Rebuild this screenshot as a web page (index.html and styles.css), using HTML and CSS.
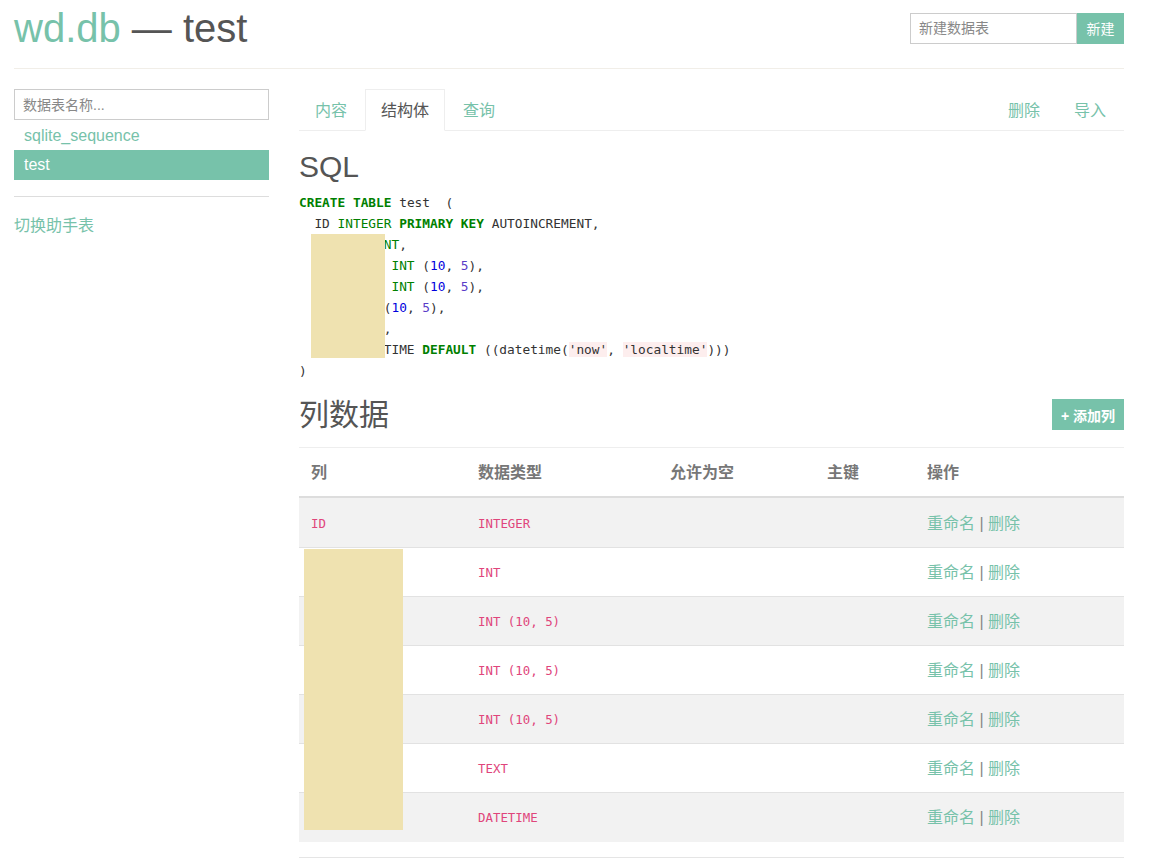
FILE: index.html
```html
<!DOCTYPE html>
<html lang="zh">
<head>
<meta charset="utf-8">
<title>wd.db — test</title>
<link rel="stylesheet" href="styles.css">
</head>
<body>
<div class="page">
  <header class="top">
    <h1 class="title"><span class="brand">wd.db</span> — test</h1>
    <form class="create">
      <input class="create-input" type="text" placeholder="新建数据表">
      <button class="btn create-btn" type="button">新建</button>
    </form>
  </header>
  <div class="divider"></div>
  <div class="main">
    <aside class="side">
      <input class="side-search" type="text" placeholder="数据表名称...">
      <ul class="tables">
        <li class="table-item">sqlite_sequence</li>
        <li class="table-item active">test</li>
      </ul>
      <div class="side-rule"></div>
      <a class="side-link">切换助手表</a>
    </aside>
    <section class="content">
      <nav class="tabs">
        <a class="tab">内容</a>
        <a class="tab active">结构体</a>
        <a class="tab">查询</a>
        <span class="tab-spacer"></span>
        <a class="tab">删除</a>
        <a class="tab">导入</a>
      </nav>
      <h2 class="heading sql-heading">SQL</h2>
      <div class="code-wrap">
        <div class="code">
          <div class="ln"><span class="kw">CREATE</span> <span class="kw">TABLE</span> test  (</div>
          <div class="ln">  ID <span class="ty">INTEGER</span> <span class="kw">PRIMARY</span> <span class="kw">KEY</span> AUTOINCREMENT,</div>
          <div class="ln">          <span class="ty">INT</span>,</div>
          <div class="ln">            <span class="ty">INT</span> (<span class="num">10</span>, <span class="num2">5</span>),</div>
          <div class="ln">            <span class="ty">INT</span> (<span class="num">10</span>, <span class="num2">5</span>),</div>
          <div class="ln">           (<span class="num">10</span>, <span class="num2">5</span>),</div>
          <div class="ln">           ,</div>
          <div class="ln">           TIME <span class="kw">DEFAULT</span> ((datetime(<span class="str">'now'</span>, <span class="str">'localtime'</span>)))</div>
          <div class="ln">)</div>
        </div>
        <div class="redact code-redact"></div>
      </div>
      <div class="cols-head">
        <h2 class="heading">列数据</h2>
        <button class="btn add-btn" type="button">+ 添加列</button>
      </div>
      <div class="table-wrap">
        <table class="cols">
          <colgroup>
            <col class="c1"><col class="c2"><col class="c3"><col class="c4"><col class="c5">
          </colgroup>
          <thead>
            <tr><th>列</th><th>数据类型</th><th>允许为空</th><th>主键</th><th>操作</th></tr>
          </thead>
          <tbody>
            <tr><td><code>ID</code></td><td><code>INTEGER</code></td><td></td><td></td><td><a class="act">重命名</a> <span class="sep">|</span> <a class="act">删除</a></td></tr>
            <tr><td></td><td><code>INT</code></td><td></td><td></td><td><a class="act">重命名</a> <span class="sep">|</span> <a class="act">删除</a></td></tr>
            <tr><td></td><td><code>INT (10, 5)</code></td><td></td><td></td><td><a class="act">重命名</a> <span class="sep">|</span> <a class="act">删除</a></td></tr>
            <tr><td></td><td><code>INT (10, 5)</code></td><td></td><td></td><td><a class="act">重命名</a> <span class="sep">|</span> <a class="act">删除</a></td></tr>
            <tr><td></td><td><code>INT (10, 5)</code></td><td></td><td></td><td><a class="act">重命名</a> <span class="sep">|</span> <a class="act">删除</a></td></tr>
            <tr><td></td><td><code>TEXT</code></td><td></td><td></td><td><a class="act">重命名</a> <span class="sep">|</span> <a class="act">删除</a></td></tr>
            <tr><td></td><td><code>DATETIME</code></td><td></td><td></td><td><a class="act">重命名</a> <span class="sep">|</span> <a class="act">删除</a></td></tr>
          </tbody>
        </table>
        <div class="redact table-redact"></div>
      </div>
      <div class="bottom-rule"></div>
    </section>
  </div>
</div>
</body>
</html>
```
FILE: styles.css
```css
* { box-sizing: border-box; }
html, body { margin: 0; padding: 0; background: #fff; }
body {
  font-family: "Liberation Sans", "Noto Sans CJK SC", Arial, sans-serif;
  color: #555;
  font-size: 14px;
  overflow: hidden;
}
.page { width: 1110px; margin-left: 14px; }

.top {
  display: flex;
  align-items: center;
  justify-content: space-between;
  padding-top: 6px;
}
.title {
  margin: 0;
  font-size: 40px;
  line-height: 44px;
  font-weight: normal;
  color: #555;
}
.brand { color: #77c2aa; }
.create { display: flex; margin: 0; }
.create-input {
  width: 167px;
  height: 31px;
  border: 1px solid #ccc;
  padding: 0 8px;
  font-family: inherit;
  font-size: 14px;
  color: #555;
  outline: none;
}
.create-input::placeholder, .side-search::placeholder { color: #888; }
.btn {
  border: 0;
  background: #77c2aa;
  color: #fff;
  font-family: inherit;
  font-size: 14px;
  cursor: pointer;
}
.create-btn { width: 47px; height: 31px; padding: 0; }

.divider { height: 1px; background: #f1eee8; margin-top: 18px; }

.main { display: flex; gap: 30px; margin-top: 20px; }
.side { width: 255px; flex: none; }
.side-search {
  display: block;
  width: 255px;
  height: 31px;
  border: 1px solid #ccc;
  padding: 0 8px;
  font-family: inherit;
  font-size: 14px;
  outline: none;
}
.tables { list-style: none; margin: 0; padding: 0; }
.table-item {
  height: 30px;
  line-height: 30px;
  padding-left: 10px;
  font-size: 16px;
  color: #77c2aa;
}
.table-item:first-child { line-height: 32px; }
.table-item.active { background: #77c2aa; color: #fff; }
.side-rule { height: 1px; background: #ddd; margin-top: 16px; }
.side-link {
  display: block;
  margin-top: 17px;
  font-size: 16px;
  line-height: 24px;
  color: #77c2aa;
}

.content { width: 825px; flex: none; }
.tabs {
  display: flex;
  border-bottom: 1px solid #eee;
}
.tab {
  display: block;
  padding: 11px 15px 9px;
  margin-right: 2px;
  margin-bottom: -1px;
  border: 1px solid transparent;
  font-size: 16px;
  line-height: 20px;
  color: #77c2aa;
}
.tab.active {
  color: #555;
  border-color: #eee #eee #fff;
  background: #fff;
}
.tab-spacer { flex: 1; }

.heading {
  margin: 0;
  font-size: 30px;
  line-height: 33px;
  font-weight: normal;
  color: #555;
}
.sql-heading { margin-top: 19px; margin-bottom: 9px; }

.code-wrap { position: relative; }
.code {
  font-family: "DejaVu Sans Mono", "Liberation Mono", monospace;
  font-size: 12.8px;
  line-height: 21px;
  color: #333;
}
.ln { white-space: pre; height: 21px; }
.kw { color: #008000; font-weight: bold; }
.ty { color: #008000; }
.num { color: #0000dd; }
.num2 { color: #5a3cc8; }
.str { background: #fdeeee; color: #333; }

.redact { position: absolute; background: #efe2b0; }
.code-redact { left: 12px; top: 42px; width: 74px; height: 124px; }

.cols-head {
  display: flex;
  align-items: center;
  justify-content: space-between;
  margin-top: 17px;
}
.add-btn { height: 31px; padding: 0 9px; font-weight: bold; }

.table-wrap { position: relative; margin-top: 16px; }
.cols {
  width: 100%;
  border-collapse: collapse;
  table-layout: fixed;
  border-top: 1px solid #eee;
}
.c1 { width: 167px; } .c2 { width: 192px; } .c3 { width: 157px; } .c4 { width: 100px; } .c5 { width: 209px; }
.cols th {
  text-align: left;
  padding: 13px 12px 11px;
  line-height: 24px;
  font-size: 16px;
  font-weight: bold;
  color: #777;
  border-bottom: 2px solid #ddd;
}
.cols td {
  padding: 12px;
  height: 49px;
  line-height: 23px;
  font-size: 16px;
  border-top: 1px solid #e2e2e2;
  vertical-align: middle;
}
.cols tbody tr:nth-child(odd) td { background: #f2f2f2; }
.cols tbody tr:first-child td { border-top: 0; height: 50px; padding-top: 13px; padding-bottom: 12px; }
code {
  font-family: "DejaVu Sans Mono", "Liberation Mono", monospace;
  font-size: 12.4px;
  color: #e0457b;
}
.act { color: #77c2aa; }
.sep { color: #888; }
.table-redact { left: 5px; top: 102px; width: 99px; height: 281px; }

.bottom-rule { height: 1px; background: #e5e5e5; margin-top: 15px; }
```
